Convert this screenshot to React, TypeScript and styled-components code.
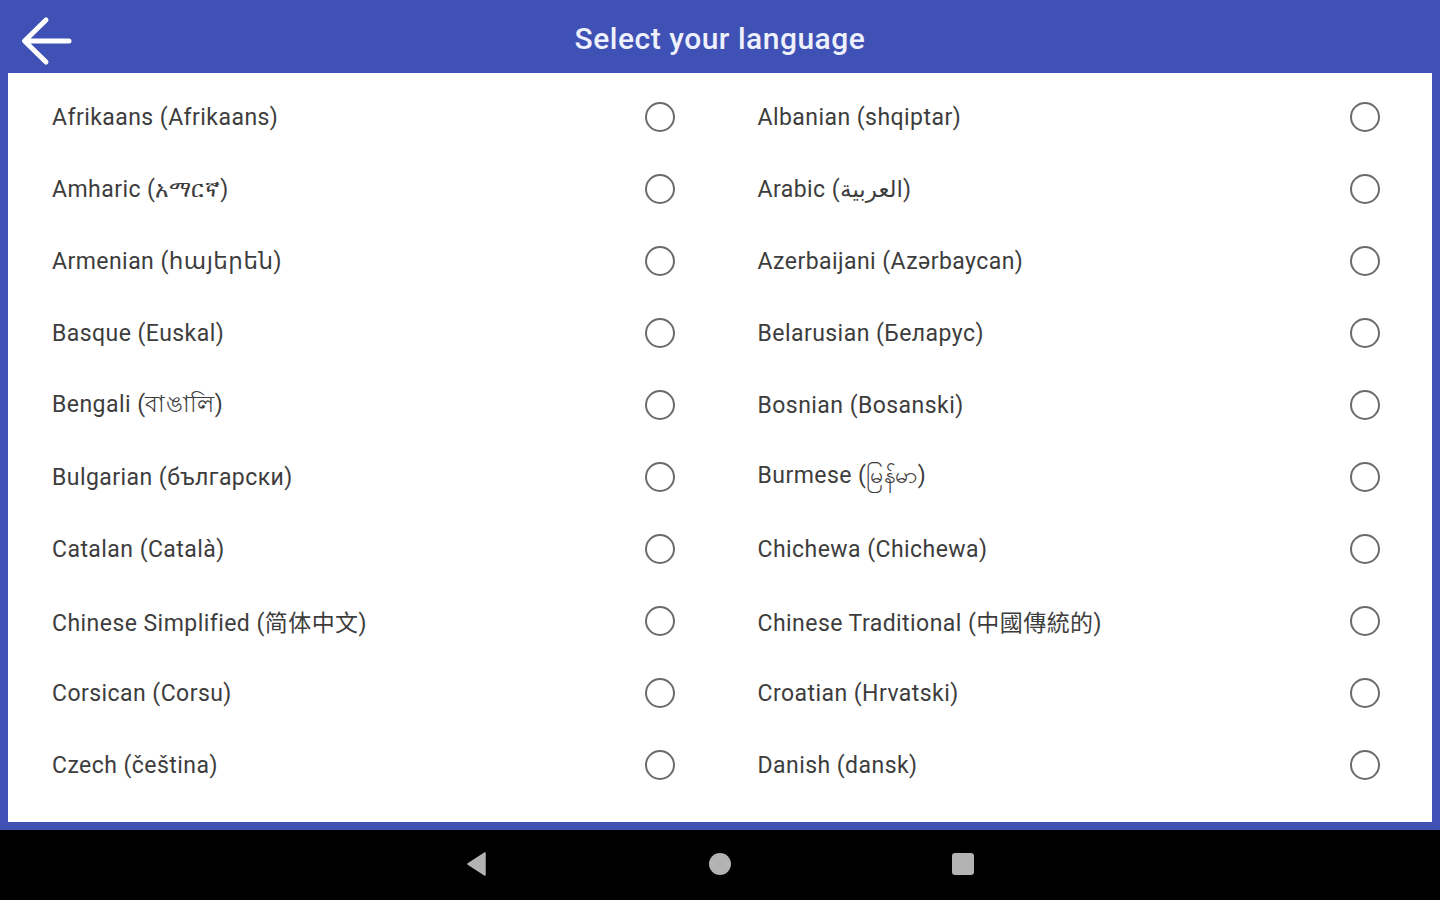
import React, { useState } from 'react'
import styled, { createGlobalStyle } from 'styled-components'

const GlobalStyle = createGlobalStyle`
  html, body {
    margin: 0;
    padding: 0;
    background: #000;
  }
  body {
    font-family: Roboto, "Noto Sans", "DejaVu Sans", "Noto Sans CJK SC", sans-serif;
  }
`

const languages = [
  'Afrikaans (Afrikaans)',
  'Albanian (shqiptar)',
  'Amharic (አማርኛ)',
  'Arabic (العربية)',
  'Armenian (հայերեն)',
  'Azerbaijani (Azərbaycan)',
  'Basque (Euskal)',
  'Belarusian (Беларус)',
  'Bengali (বাঙালি)',
  'Bosnian (Bosanski)',
  'Bulgarian (български)',
  'Burmese (မြန်မာ)',
  'Catalan (Català)',
  'Chichewa (Chichewa)',
  'Chinese Simplified (简体中文)',
  'Chinese Traditional (中國傳統的)',
  'Corsican (Corsu)',
  'Croatian (Hrvatski)',
  'Czech (čeština)',
  'Danish (dansk)',
]

const Screen = styled.div`
  width: 1440px;
  height: 900px;
  display: flex;
  flex-direction: column;
  background: #3f51b5;
  overflow: hidden;
`

const Toolbar = styled.header`
  height: 73px;
  flex-shrink: 0;
  display: grid;
  grid-template-columns: 90px 1fr 90px;
  align-items: center;
  color: #fff;
`

const BackButton = styled.button`
  border: none;
  background: none;
  padding: 0;
  height: 73px;
  display: flex;
  align-items: flex-start;
  cursor: pointer;
`

const Title = styled.h1`
  margin: 3px 0 0;
  text-align: center;
  font-size: 30px;
  font-weight: 500;
  color: #eef0fb;
  letter-spacing: 0.5px;
`

const Frame = styled.main`
  flex: 1;
  display: flex;
  padding: 0 8px 8px;
`

const Panel = styled.section`
  flex: 1;
  background: #fff;
  display: grid;
  grid-template-columns: 1fr 1fr;
  grid-auto-rows: 72px;
  column-gap: 83px;
  padding: 8px 52px 0 44px;
  align-content: start;
`

const Row = styled.label`
  display: flex;
  align-items: center;
  justify-content: space-between;
  cursor: pointer;
`

const Name = styled.span`
  font-size: 23px;
  color: #3d3d3d;
  letter-spacing: 0.45px;
`

const Radio = styled.span<{ $checked: boolean }>`
  width: 30px;
  height: 30px;
  box-sizing: border-box;
  border-radius: 50%;
  border: 2.5px solid ${(p) => (p.$checked ? '#3f51b5' : '#6b6b6b')};
  display: flex;
  align-items: center;
  justify-content: center;

  &::after {
    content: '';
    width: 14px;
    height: 14px;
    border-radius: 50%;
    background: #3f51b5;
    display: ${(p) => (p.$checked ? 'block' : 'none')};
  }
`

const NavBar = styled.nav`
  height: 70px;
  box-sizing: border-box;
  flex-shrink: 0;
  background: #000;
  display: grid;
  grid-template-columns: repeat(3, 243px);
  justify-content: center;
  justify-items: center;
  align-items: center;
  padding-bottom: 2px;
`

const NavIcon = styled.svg`
  display: block;
`

const App = () => {
  const [selected, setSelected] = useState<string | null>(null)

  return (
    <>
      <GlobalStyle />
      <Screen>
        <Toolbar>
          <BackButton aria-label="Back">
            <svg width="80" height="73" viewBox="0 0 80 73">
              <path d="M69 41 H25 M46 20 L24.5 41 L46 62" fill="none" stroke="#fff" strokeWidth="5" strokeLinecap="round" strokeLinejoin="round" />
            </svg>
          </BackButton>
          <Title>Select your language</Title>
          <div />
        </Toolbar>
        <Frame>
          <Panel>
            {languages.map((lang) => (
              <Row key={lang} onClick={() => setSelected(lang)}>
                <Name>{lang}</Name>
                <Radio $checked={selected === lang} />
              </Row>
            ))}
          </Panel>
        </Frame>
        <NavBar>
          <NavIcon width="24" height="26" viewBox="0 0 24 26">
            <path d="M20 2 L20 24 L3 13 Z" fill="#b3b3b3" strokeLinejoin="round" stroke="#b3b3b3" strokeWidth="1.5" />
          </NavIcon>
          <NavIcon width="24" height="24" viewBox="0 0 24 24">
            <circle cx="12" cy="12" r="11" fill="#b3b3b3" />
          </NavIcon>
          <NavIcon width="24" height="24" viewBox="0 0 24 24">
            <rect x="1" y="1" width="22" height="22" rx="3" fill="#b3b3b3" />
          </NavIcon>
        </NavBar>
      </Screen>
    </>
  )
}

export default App
